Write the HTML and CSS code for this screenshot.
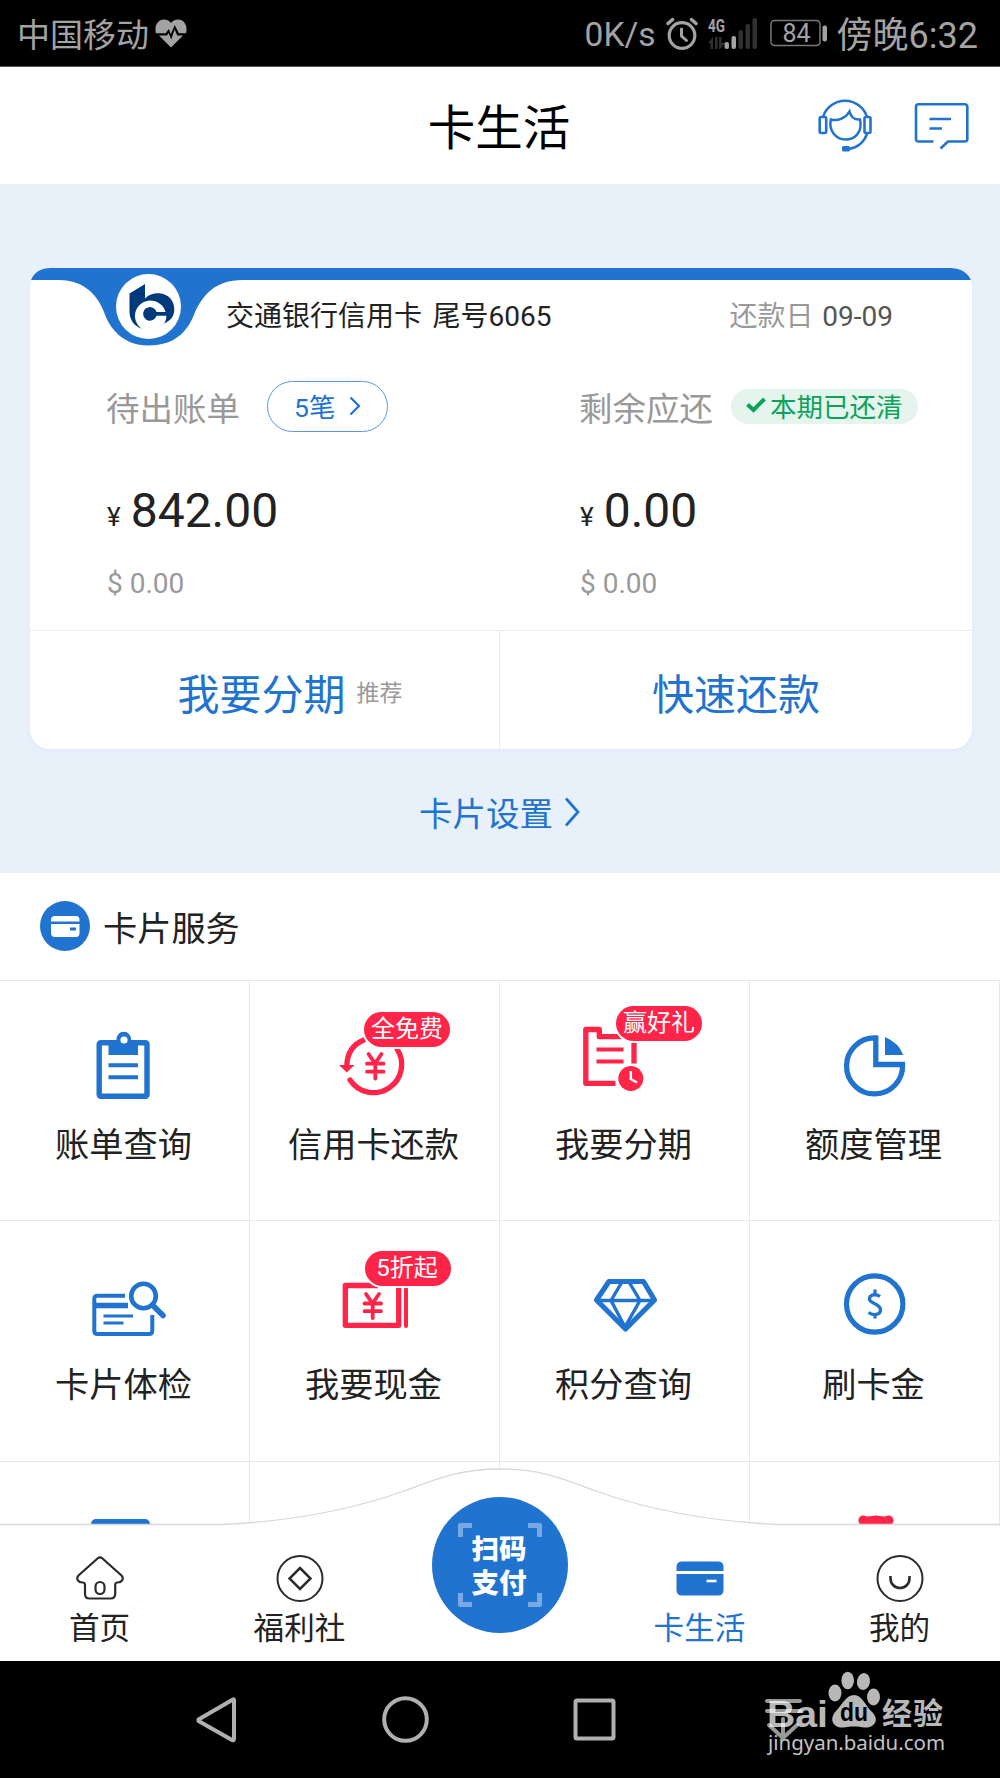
FILE: index.html
```html
<!DOCTYPE html>
<html lang="zh-CN">
<head>
<meta charset="utf-8">
<title>卡生活</title>
<link rel="stylesheet" href="styles.css">
</head>
<body>
<div class="screen">
  <div class="status">
    <span class="carrier">中国移动</span>
    <svg class="heart" width="32" height="29" viewBox="0 0 32 29"><path d="M16 28.500 4 16.600H12L13.600 14 16.200 20.500 19.600 10.500 22.300 16.600H28ZM.9 14.300C-.8 7 2.500.5 9 .5c3 0 5.500 1.300 7 3.500 1.500-2.200 4-3.500 7-3.500 6.500 0 9.800 6.500 8.100 13.800h-7.200L19.700 6 15.800 15.200 13.900 10 10.600 14.300Z" fill="#a3a3a3"/></svg>
    <span class="speed">0K/s</span>
    <svg class="sys" width="162" height="38" viewBox="0 0 162 38">
      <g fill="none" stroke="#a3a3a3" stroke-width="3.200" stroke-linecap="round">
        <circle cx="16" cy="20.500" r="12.800"/><path d="M15.500 14v7l5 4.500" stroke-width="3"/><path d="M2 8.500l4.500-4M25.500 4.500l4.500 4" stroke-width="3.400"/>
      </g>
      <text class="net" x="42" y="17" textLength="17" lengthAdjust="spacingAndGlyphs">4G</text>
      <g fill="#303030"><path d="M42 28l5-6v12h-2.500v-6ZM49 22h2.500v12H49ZM53 22h2.500v6h3.500l-5 6h-1Z"/>
      <rect x="72.500" y="15" width="4.500" height="19" rx="2"/><rect x="79.500" y="9" width="4.500" height="25" rx="2"/><rect x="86.500" y="3" width="4.500" height="31" rx="2"/></g>
      <g fill="#a3a3a3"><rect x="58.500" y="27" width="4.500" height="7" rx="2"/><rect x="65.500" y="21" width="4.500" height="13" rx="2"/><rect x="156.500" y="10.500" width="4.500" height="16" rx="2"/></g>
      <rect x="105" y="5.500" width="49" height="25" rx="3.500" fill="none" stroke="#777" stroke-width="1.500"/>
      <text class="batt" x="116.500" y="26.500">84</text>
    </svg>
    <span class="time">傍晚6:32</span>
  </div>

  <header class="header">
    <h1 class="title">卡生活</h1>
    <div class="actions">
      <svg width="54" height="56" viewBox="0 0 54 56" fill="none" stroke="#2173d0" stroke-width="2.500">
        <path d="M5 19A23 23 0 0 1 49 19M49 36A23 23 0 0 1 31 51"/>
        <rect x="1.700" y="19" width="6.500" height="16" rx="1.500" stroke-width="2.600"/><rect x="46.500" y="19" width="6" height="16" rx="1.500" stroke-width="2.600"/>
        <path d="M12.800 21.500C20 23.500 28 20 31.500 13.500 33 19 37 22 42 21.500 45 35 36 41.500 27.500 41.500 18 41.500 10.500 33 12.800 21.500Z"/>
        <rect x="24" y="48" width="8" height="5.500" rx="1.500" fill="#2173d0" stroke="none"/>
      </svg>
      <svg width="55" height="50" viewBox="0 0 55 50" fill="none" stroke="#2173d0" stroke-width="2.600">
        <path d="M19.500 40.500H4.500Q2 40.500 2 38V6Q2 3.300 4.500 3.300H50.500Q53.300 3.300 53.300 6V38Q53.300 40.500 50.500 40.500H34L26.500 47.500M15.500 18H37M15.500 27.500H28"/>
      </svg>
    </div>
  </header>

  <section class="overview">
    <div class="card">
      <svg class="card-top" width="942" height="78" viewBox="0 0 942 78">
        <path d="M1 12Q6 0 21 0H920Q935 0 941 12H213C184 12 173 28 165 44 159 61 147 77.500 118.500 77.500 92 77.500 79 59 74 44 66 23 50 12 29 12Z" fill="#2173d0"/>
        <circle cx="118.500" cy="38.500" r="32.500" fill="#fff"/>
        <path d="M99.500 25.500 115 16V30.500C119 26.500 124 25 129 25.300 139 26 144.500 33 144.300 42 144 49 140 53 134 55.500 136 53 136.500 50 136.300 47.800H126.500A6.800 6.800 0 1 1 126.500 44H135.500C134 37 127 32.500 120 32.500 111 33 105 40 105 48 105 53 107.500 57.500 112 61 103 57.500 99.500 51 99.500 43Z" fill="#003a7d"/>
      </svg>
      <div class="card-head">
        <span>交通银行信用卡&nbsp; 尾号6065</span>
        <span class="due">还款日&nbsp; <b>09-09</b></span>
      </div>
      <div class="bill">
        <div class="col">
          <div class="bill-label">待出账单
            <span class="pill">5笔<svg width="12" height="20" viewBox="0 0 12 20"><path d="M1.500 1.500 10 10 1.500 18.500" fill="none" stroke="#2173d0" stroke-width="2.200"/></svg></span>
          </div>
          <div class="cny"><i>¥</i>842.00</div>
          <div class="usd">$ 0.00</div>
        </div>
        <div class="col">
          <div class="bill-label">剩余应还
            <span class="paid"><svg width="20" height="16" viewBox="0 0 20 16"><path d="M1.500 7.500 7.500 13 18.500 2" fill="none" stroke="#0ba35b" stroke-width="4"/></svg>本期已还清</span>
          </div>
          <div class="cny"><i>¥</i>0.00</div>
          <div class="usd">$ 0.00</div>
        </div>
      </div>
      <div class="card-actions">
        <div class="act act-split">我要分期<small>推荐</small></div>
        <div class="act">快速还款</div>
      </div>
    </div>
    <div class="settings">卡片设置<svg width="16" height="30" viewBox="0 0 16 30"><path d="M2 1.500 14 15 2 28.500" fill="none" stroke="#2173d0" stroke-width="2.700"/></svg></div>
  </section>

  <section class="services">
    <h2 class="services-title">
      <svg width="50" height="50" viewBox="0 0 50 50"><circle cx="25" cy="25" r="25" fill="#2173d0"/><path d="M11 20.500V19Q11 15 15 15H36Q39.500 15 39.500 19V20.500ZM11 23H39.500V32Q39.500 36 36 36H15Q11 36 11 32Z" fill="#fff"/><rect x="30" y="26.500" width="6" height="3" fill="#2173d0"/></svg>
      卡片服务
    </h2>
    <div class="grid">
      <div class="tile">
        <svg class="icon" viewBox="0 0 250 140"><rect x="99.200" y="62.800" width="47.800" height="53.500" rx="1.500" fill="none" stroke="#2173d0" stroke-width="5.400"/><path d="M108.500 60H116.500A7.300 7.300 0 1 1 131 60H138V75H108.500Z" fill="#2173d0"/><circle cx="124" cy="60" r="3.600" fill="#fff"/><path d="M108.500 85.300H138M108.500 97.300H138" stroke="#2173d0" stroke-width="4"/></svg>
        <span>账单查询</span>
      </div>
      <div class="tile">
        <svg class="icon" viewBox="0 0 250 140"><g fill="none" stroke="#ff2448" stroke-width="5.300"><path d="M115 59.500C103 64 97 73 96.800 86"/><path d="M100 100A28 28 0 1 0 147 69" stroke-linecap="round"/><path d="M118.500 74 125 83.500 131.500 74M117 83.700H133.500M117 91.700H133.500M125.300 84V98.500" stroke-width="3.800" stroke-linecap="round"/></g><path d="M89 85H104.500L96.800 92.500Z" fill="#ff2448"/></svg>
        <em class="badge badge-free">全免费</em>
        <span>信用卡还款</span>
      </div>
      <div class="tile">
        <svg class="icon" viewBox="0 0 250 140"><g fill="none" stroke="#ff2448" stroke-width="5.300"><path d="M115.500 103.300H85.800V49.500H99.300V56.700H121" stroke-linejoin="round"/><path d="M134 63V83.500"/><path d="M96.500 69.500H123.500M96.500 81.500H123.500" stroke-width="4"/></g><circle cx="130.800" cy="98.500" r="12.500" fill="#ff2448"/><path d="M130.800 91V99L137 102.500" fill="none" stroke="#fff" stroke-width="2.500"/></svg>
        <em class="badge badge-gift">赢好礼</em>
        <span>我要分期</span>
      </div>
      <div class="tile">
        <svg class="icon" viewBox="0 0 250 140"><path d="M125.800 58A28 28 0 1 0 152.500 84.500H125.800Z" fill="none" stroke="#2173d0" stroke-width="5.300"/><path d="M135 57Q149 63 153.300 75H135Z" fill="#2173d0"/></svg>
        <span>额度管理</span>
      </div>
      <div class="tile">
        <svg class="icon" viewBox="0 0 250 140"><g fill="none" stroke="#2173d0"><path d="M125 75.800H97.500Q94.300 75.800 94.300 79V110.500Q94.300 114 97.500 114H149Q152.300 114 152.300 110.500V95" stroke-width="4"/><path d="M95 85.500H128" stroke-width="5.500"/><path d="M103.500 96H133M103.500 103H123.500" stroke-width="3"/><circle cx="143.500" cy="76" r="12.300" stroke-width="4.600"/><path d="M152.500 85 163 95.500" stroke-width="5.500" stroke-linecap="round"/></g></svg>
        <span>卡片体检</span>
      </div>
      <div class="tile">
        <svg class="icon" viewBox="0 0 250 140"><g fill="none" stroke="#ff2448" stroke-width="5.300"><path d="M128 65.500H95.300V105.300H148.700V68" stroke-linejoin="round"/><path d="M156 69V106" stroke-width="4" stroke-linecap="round"/><path d="M116 74 122.500 83.500 129 74M114.500 83.500H131M114.500 91.200H131M122.700 84V98" stroke-width="3.800" stroke-linecap="round"/></g></svg>
        <em class="badge badge-sale">5折起</em>
        <span>我要现金</span>
      </div>
      <div class="tile">
        <svg class="icon" viewBox="0 0 250 140"><g fill="none" stroke="#2173d0" stroke-linejoin="round"><path d="M109 61.500H143.500L154.500 80 125.500 109 96.500 80Z" stroke-width="5.200"/><path d="M97 80.500H154M122 62 111 80.500 125 107 140 80.500 129 62" stroke-width="3.400"/></g></svg>
        <span>积分查询</span>
      </div>
      <div class="tile">
        <svg class="icon" viewBox="0 0 250 140"><circle cx="124.700" cy="84" r="28.200" fill="none" stroke="#2173d0" stroke-width="5.200"/><path d="M130 76.500C126 73.500 119.500 74.500 119.500 79 119.500 84 130.500 83 130.500 90 130.500 95 123 96 118.500 92.500M125 69.500V75M125 94V98.500" fill="none" stroke="#2173d0" stroke-width="3.300"/></svg>
        <span>刷卡金</span>
      </div>
      <div class="tile"><svg class="icon" viewBox="0 0 250 140"><rect x="91" y="58" width="59" height="40" rx="5" fill="#2173d0"/></svg></div>
      <div class="tile"></div>
      <div class="tile"></div>
      <div class="tile"><svg class="icon" viewBox="0 0 250 140"><path d="M111 64C106 60 109 54 114 54.500 118 56.500 122 54.500 126 54.500 130 54.500 134 56.500 138 54.500 143 54 146 60 141 64Z" fill="#ff2448"/></svg></div>
    </div>
  </section>

  <nav class="tabs">
    <svg class="tabs-bg" width="1000" height="193" viewBox="0 0 1000 193"><path d="M-2 56.500H222C300 53 355 40 400 24.500 433 13 455 1 500 1 545 1 567 13 600 24.500 645 40 700 53 778 56.500H1002V200H-2Z" fill="#fff" stroke="#d8d8d8" stroke-width="1.300"/></svg>
    <div class="tab">
      <svg width="50" height="50" viewBox="0 0 50 50" fill="none" stroke="#2b2b2b" stroke-width="2.200"><path d="M22.500 4.500Q25 2.200 27.500 4.500L46.500 21.500C49.500 25 46.500 28.500 42.500 28.500 41 28.500 40.200 29.500 40.200 31V40Q40.200 44.500 35.500 44.500H14.500Q10 44.500 10 40V31C10 29.500 9 28.500 7.500 28.500 3.500 28.500.5 25 3.500 21.500Z"/><rect x="20.500" y="28" width="9" height="12" rx="4.500"/></svg>
      <span>首页</span>
    </div>
    <div class="tab">
      <svg width="50" height="50" viewBox="0 0 50 50" fill="none" stroke="#2b2b2b" stroke-width="2"><circle cx="25" cy="24.500" r="22.500"/><path d="M25 14 35.500 24.500 25 35 14.500 24.500Z" stroke-width="2.500"/></svg>
      <span>福利社</span>
    </div>
    <div class="scan">
      <svg class="scan-frame" width="86" height="86" viewBox="0 0 86 86"><path d="M15 3.500H3.500V15M71 3.500H82.500V15M3.500 71V82.500H15M82.500 71V82.500H71" fill="none" stroke="#79a9e2" stroke-width="5" stroke-linejoin="round"/></svg>
      <span>扫码<br>支付</span>
    </div>
    <div class="tab tab-on">
      <svg width="50" height="50" viewBox="0 0 50 50"><path d="M1.500 17V13Q1.500 7.500 7 7.500H43Q48.500 7.500 48.500 13V17ZM1.500 20H48.500V36Q48.500 41.500 43 41.500H7Q1.500 41.500 1.500 36Z" fill="#2173d0"/><path d="M31.500 27H41.500" stroke="#fff" stroke-width="2.600"/></svg>
      <span>卡生活</span>
    </div>
    <div class="tab">
      <svg width="50" height="50" viewBox="0 0 50 50" fill="none" stroke="#2b2b2b" stroke-width="2"><circle cx="25" cy="24.500" r="22.500"/><path d="M15.500 22V24.500A9.500 9.500 0 0 0 34.500 24.500V22" stroke-width="2.600"/></svg>
      <span>我的</span>
    </div>
  </nav>

  <div class="sysnav">
    <svg width="1000" height="117" viewBox="0 0 1000 117">
      <g fill="none" stroke="#b0b0b0" stroke-width="4" stroke-linejoin="round"><path d="M198.500 58.500 233 38.500Q234 38 234 39.500V77.500Q234 80 232 79L198.500 60Z"/><circle cx="405.500" cy="58.500" r="21.300"/><rect x="575.500" y="39.500" width="38" height="38" rx="1.500"/></g>
      <g fill="#b8b8b8"><ellipse cx="835" cy="32" rx="6.500" ry="8.500"/><ellipse cx="847.700" cy="19.500" rx="6.300" ry="8.800"/><ellipse cx="863.500" cy="20.500" rx="6.500" ry="8.500" transform="rotate(10 863.500 20.500)"/><ellipse cx="873.500" cy="36" rx="6.500" ry="8.500"/><path d="M854 34C862 34 866 45 871 50 881 59 874 67 865 66.500 857 65 851 65 843 66.500 834 67 828 59 836 50 843 43 846 34 854 34Z"/></g>
      <text class="wm-bai" x="767" y="65.500" textLength="61" lengthAdjust="spacingAndGlyphs">Bai</text>
      <path d="M767 40H800M767 50H800M783 58V77M769 64 783 77 797 64" fill="none" stroke="#fff" stroke-opacity=".6" stroke-width="4" stroke-linecap="round"/>
      <text class="wm-du" x="840" y="60" textLength="28" lengthAdjust="spacingAndGlyphs">du</text>
      <text class="wm-cn" x="882" y="62.500" textLength="61">经验</text>
      <text class="wm-url" x="768" y="89" textLength="177" lengthAdjust="spacingAndGlyphs">jingyan.baidu.com</text>
    </svg>
  </div>
</div>
</body>
</html>
```
FILE: styles.css
```css
* { box-sizing: border-box; }
body { margin: 0; background: #fff; font-family: Roboto, "Noto Sans CJK SC", sans-serif; color: #222; }
h1, h2 { margin: 0; font-weight: 400; }
b, i, em { font-weight: 400; font-style: normal; }
svg { display: block; flex: none; }
.screen { width: 1000px; height: 1778px; overflow: hidden; display: flex; flex-direction: column; }
.screen > * { flex: none; }

.status { height: 67px; background: #000; border-bottom: 1px solid #555; color: #a3a3a3; display: flex; align-items: center; padding: 2px 22px 0 17px; white-space: nowrap; }
.carrier { font-size: 33px; font-family: "Noto Sans CJK SC", sans-serif; line-height: 64px; padding-bottom: 2px; }
.heart { margin: 0 0 1px 6px; }
.speed { margin-left: auto; font-size: 33.500px; }
.sys { margin-left: 10px; }
.net { font: 700 19px Roboto, sans-serif; fill: #a3a3a3; }
.batt { font: 400 25px Roboto, sans-serif; fill: #a3a3a3; }
.time { margin-left: 9px; font-size: 36px; padding-bottom: 5px; }

.header { height: 117px; display: grid; grid-template-columns: 1fr auto 1fr; align-items: center; }
.title { grid-column: 2; font-size: 47.500px; line-height: 60px; color: #000; padding-top: 6px; margin-right: 2px; }
.actions { display: flex; justify-content: flex-end; align-items: center; gap: 42px; padding-right: 31px; }

.overview { height: 689px; background: #e8f0fa; padding: 84px 28px 0 30px; }
.card { height: 481px; position: relative; background: #fff; border-radius: 20px; display: flex; flex-direction: column; box-shadow: 0 2px 4px #deebf8; }
.card-top { position: absolute; left: 0; top: 0; }
.card-head { height: 92px; display: flex; justify-content: space-between; align-items: center; padding: 0 79px 0 196px; font-size: 28px; word-spacing: -1.700px; white-space: pre; }
.due { color: #999; word-spacing: -2.500px; }
.due b { color: #555; }
.bill { height: 270px; display: grid; grid-template-columns: 473px 1fr; padding-left: 76px; }
.bill-label { height: 94px; display: flex; align-items: center; padding-bottom: 2px; font-size: 33.500px; color: #999; }
.pill { display: flex; align-items: center; gap: 14px; width: 121px; height: 51px; padding: 0 0 2px 26px; margin: 1px 0 0 27px; border: 1px solid #5b98e0; border-radius: 26px; font-size: 26.500px; color: #2173d0; }
.paid { display: flex; align-items: center; gap: 4px; height: 35px; width: 187px; padding: 0 0 2px 15px; margin: 0 0 0 18px; border-radius: 18px; background: #e5f4ed; color: #0ba35b; font-size: 26.500px; }
.cny { height: 110px; line-height: 114px; font-size: 48px; }
.cny i { font-size: 26px; margin: 0 10px 0 1px; position: relative; top: -1px; }
.usd { height: 40px; line-height: 40px; font-size: 28px; color: #999; padding-left: 1px; }
.card-actions { flex: 1; display: grid; grid-template-columns: 470px 1fr; border-top: 1px solid #ebebeb; }
.act { display: flex; align-items: center; justify-content: center; font-size: 42px; color: #2173d0; padding-top: 2px; }
.act-split { border-right: 1px solid #ebebeb; gap: 11px; padding-left: 51px; }
.act small { font-size: 23px; color: #999; }
.settings { display: flex; align-items: center; justify-content: center; gap: 11px; height: 125px; font-size: 33.500px; color: #2173d0; padding-right: 3px; }

.services { height: 651px; overflow: hidden; }
.services-title { height: 107px; display: flex; align-items: center; gap: 13px; padding: 0 0 1px 40px; font-size: 34.200px; }
.grid { display: grid; grid-template-columns: repeat(4, 250px); grid-template-rows: 240px 241px 241px; }
.tile { position: relative; border-top: 1px solid #e8e8e8; border-right: 1px solid #e8e8e8; text-align: center; font-size: 34.200px; line-height: 50px; }
.tile > span { padding-right: 2px; }
.icon { width: 250px; height: 140px; margin: -1px 0 0; }
.badge { position: absolute; width: 86px; height: 35px; border-radius: 18px; background: #ff2448; color: #fff; font-size: 24px; line-height: 35px; box-shadow: 0 0 0 2px #fff; }
.badge-free { left: 114px; top: 31px; }
.badge-gift { left: 116px; top: 25px; }
.badge-sale { left: 115px; top: 30px; padding-right: 2px; }

.tabs { position: relative; height: 193px; margin-top: -56px; display: grid; grid-template-columns: repeat(5, 200px); }
.tabs-bg { position: absolute; left: 0; top: 0; }
.tab { position: relative; padding: 86px 1px 0 0; display: flex; flex-direction: column; align-items: center; font-size: 30.600px; line-height: 50px; }
.tab-on { color: #2173d0; }
.scan { position: relative; width: 136px; height: 136px; margin: 29px 0 0 32px; border-radius: 50%; background: #2173d0; color: #fff; font-size: 27.500px; font-weight: 900; line-height: 34px; text-align: center; padding: 36px 2px 0 0; }
.scan-frame { position: absolute; left: 25px; top: 25px; }

.sysnav { height: 117px; background: #000; }
.wm-bai { font: 700 37px "Liberation Sans", sans-serif; fill: #b8b8b8; }
.wm-du { font: 700 26px "Liberation Sans", sans-serif; fill: #000; }
.wm-cn { font: 700 30px "Noto Sans CJK SC", sans-serif; fill: #b8b8b8; }
.wm-url { font: 400 20.500px "Noto Sans", sans-serif; fill: #c4c4c4; }
```
